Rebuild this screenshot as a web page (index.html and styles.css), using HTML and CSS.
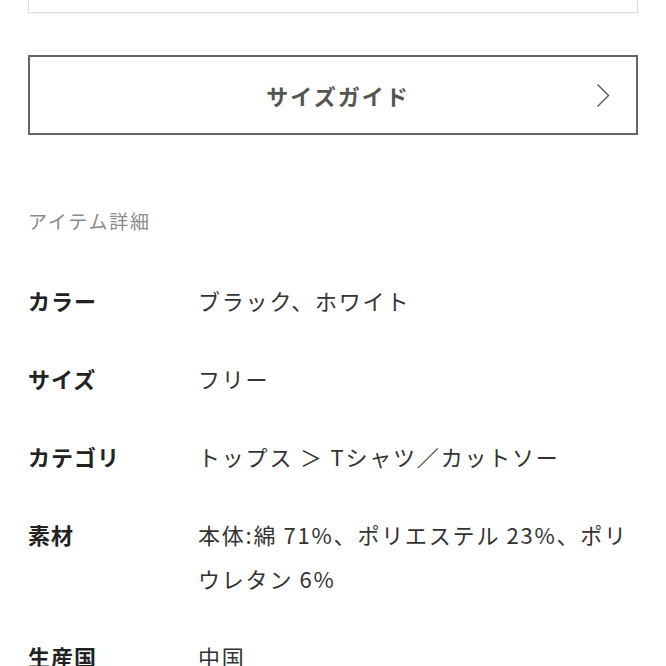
FILE: index.html
```html
<!DOCTYPE html>
<html lang="ja">
<head>
    <meta charset="UTF-8">
    <meta name="viewport" content="width=device-width, initial-scale=1.0">
    <title>アイテム詳細</title>
    <link rel="stylesheet" href="styles.css">
</head>
<body>
    <div class="page">
        <div class="top-box"></div>

        <a class="guide-button" href="#">
            <span></span>
            <span class="guide-label">サイズガイド</span>
            <svg class="chevron" width="14" height="25" viewBox="0 0 14 25">
                <path d="M1.5 1.5 L12.5 12.5 L1.5 23.5" fill="none" stroke="#555" stroke-width="1.4"/>
            </svg>
        </a>

        <h2 class="section-title">アイテム詳細</h2>

        <dl class="detail-list">
            <div class="detail-row">
                <dt>カラー</dt>
                <dd>ブラック、ホワイト</dd>
            </div>
            <div class="detail-row">
                <dt>サイズ</dt>
                <dd>フリー</dd>
            </div>
            <div class="detail-row">
                <dt>カテゴリ</dt>
                <dd>トップス ＞ Tシャツ／カットソー</dd>
            </div>
            <div class="detail-row">
                <dt>素材</dt>
                <dd>本体:綿&thinsp;71%、ポリエステル&thinsp;23%、ポリウレタン&thinsp;6%</dd>
            </div>
            <div class="detail-row">
                <dt>生産国</dt>
                <dd>中国</dd>
            </div>
        </dl>
    </div>
</body>
</html>
```

FILE: styles.css
```css
body {
    margin: 0;
    padding: 0;
    background-color: #fff;
    font-family: "Noto Sans CJK JP", "Noto Sans", sans-serif;
    color: #333;
}
.page {
    padding: 0 28px;
    overflow: hidden;
    height: 666px;
}
.top-box {
    height: 12px;
    border: 1px solid #dedede;
    border-top: none;
    box-shadow: 0 1px 2px rgba(0, 0, 0, 0.06);
}
.guide-button {
    margin-top: 42px;
    height: 76px;
    border: 2px solid #666;
    display: grid;
    grid-template-columns: 1fr auto 1fr;
    align-items: center;
    text-decoration: none;
    padding-right: 26px;
    padding-left: 36px;
}
.guide-label {
    font-size: 22px;
    font-weight: bold;
    color: #555;
    letter-spacing: 2px;
}
.chevron {
    justify-self: end;
}
.section-title {
    margin: 72px 0 0 0;
    font-size: 19px;
    font-weight: normal;
    line-height: 28px;
    color: #8a8a8a;
    letter-spacing: 1.8px;
}
.detail-list {
    margin: 43px 0 0 0;
}
.detail-row {
    display: flex;
    margin-bottom: 34px;
    line-height: 44px;
    font-size: 22px;
}
.detail-row dt {
    width: 170px;
    flex-shrink: 0;
    font-weight: bold;
    color: #222;
    letter-spacing: 1px;
}
.detail-row dd {
    margin: 0;
    color: #333;
    letter-spacing: 1.8px;
}
```
